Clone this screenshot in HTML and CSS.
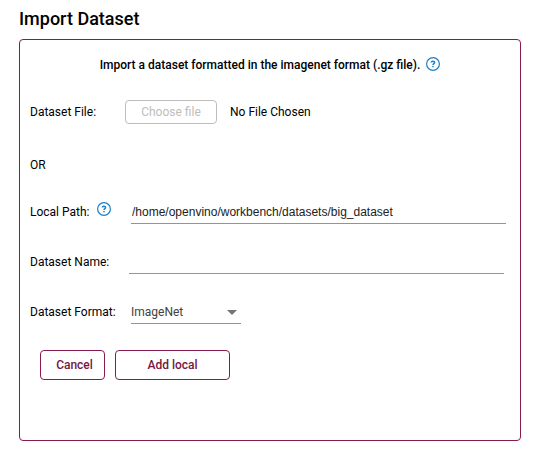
FILE: index.html
```html
<!DOCTYPE html>
<html lang="en">
<head>
<meta charset="utf-8">
<meta name="viewport" content="width=device-width, initial-scale=1">
<title>Import Dataset</title>
<link rel="stylesheet" href="styles.css">
</head>
<body>
<main class="page">
  <h1 class="title">Import Dataset</h1>
  <form class="panel">
    <div class="intro">
      <p class="intro-text">Import a dataset formatted in the imagenet format (.gz file).</p>
      <button class="help" type="button" aria-label="Help">
        <svg class="help-icon" viewBox="0 0 14 14"><circle cx="7" cy="7" r="6.4"/><path d="M5.300 5.600C5.300 4.600 6.100 4.200 7 4.200s1.600.5 1.600 1.400C8.600 6.600 7 6.700 7 8M7 9v1.300"/></svg>
      </button>
    </div>
    <div class="row row-file">
      <span class="label">Dataset File:</span>
      <button class="btn btn-file" type="button" disabled>Choose file</button>
      <span class="file-name">No File Chosen</span>
    </div>
    <p class="or">OR</p>
    <div class="row">
      <div class="label label-help">
        <label for="path">Local Path:</label>
        <button class="help" type="button" aria-label="Help">
          <svg class="help-icon" viewBox="0 0 14 14"><circle cx="7" cy="7" r="6.4"/><path d="M5.300 5.600C5.300 4.600 6.100 4.200 7 4.200s1.600.5 1.600 1.400C8.600 6.600 7 6.700 7 8M7 9v1.300"/></svg>
        </button>
      </div>
      <input class="field" id="path" type="text" value="/home/openvino/workbench/datasets/big_dataset">
    </div>
    <div class="row row-name">
      <label class="label" for="name">Dataset Name:</label>
      <input class="field" id="name" type="text">
    </div>
    <div class="row">
      <label class="label" for="format">Dataset Format:</label>
      <div class="select-wrap">
        <select class="field select" id="format"><option>ImageNet</option></select>
        <svg class="arrow" viewBox="0 0 10 5"><path d="M0 0h10L5 5z"/></svg>
      </div>
    </div>
    <div class="actions">
      <button class="btn btn-cancel" type="button">Cancel</button>
      <button class="btn btn-add" type="submit">Add local</button>
    </div>
  </form>
</main>
</body>
</html>
```
FILE: styles.css
```css
* {
  box-sizing: border-box;
}

body {
  margin: 0;
  background: #fff;
  color: #000;
  font: 12px/20px Roboto, sans-serif;
}

.page {
  padding: 7px 20px 16px 19px;
}

.title {
  margin: 0 0 8px;
  font-size: 18px;
  line-height: 24px;
  font-weight: 500;
}

.panel {
  padding: 0 14px 60px 10px;
  border: 1px solid #861b50;
  border-radius: 4px;
}

.intro {
  display: flex;
  align-items: center;
  justify-content: center;
  gap: 6px;
  height: 50px;
  padding-left: 4px;
}

.intro-text {
  margin: 0;
  font-weight: 500;
}

.help {
  display: block;
  padding: 0 0 2px;
  border: 0;
  background: none;
}

.help-icon {
  display: block;
  width: 14px;
  height: 14px;
  fill: none;
  stroke: #1b80c9;
  stroke-width: 1.2;
}

.help-icon path {
  stroke-width: 1.5;
}

.row {
  display: flex;
  align-items: center;
  height: 50px;
}

.row-file {
  height: 44px;
}

.row-name {
  padding-right: 2px;
}

.label {
  flex: 0 0 101px;
}

.row-name .label {
  flex-basis: 99px;
}

.row-file .label {
  flex-basis: 95px;
}

.label-help {
  display: flex;
  align-items: flex-start;
  gap: 8px;
}

.btn {
  padding: 0;
  border: 1px solid #861b50;
  border-radius: 4px;
  background: #fff;
  color: #76163f;
  font: 500 12px/20px Roboto, sans-serif;
}

.btn-file {
  width: 92px;
  height: 24px;
  border-color: #bdbdbd;
  color: #bdbdbd;
  font-weight: 400;
}

.file-name {
  margin-left: 13px;
}

.or {
  margin: 21px 0 12px;
}

.field {
  flex: 1;
  min-width: 0;
  height: 24px;
  padding: 0 1px;
  border: 0;
  border-bottom: 1px solid #949494;
  border-radius: 0;
  outline: 0;
  background: transparent;
  color: #212121;
  font: 12px "Liberation Sans", Arial, sans-serif;
}

.select-wrap {
  position: relative;
  width: 110px;
}

.select {
  display: block;
  width: 100%;
  padding: 0;
  appearance: none;
  color: #424242;
  font-family: Roboto, sans-serif;
}

.arrow {
  position: absolute;
  top: 10px;
  right: 4px;
  width: 10px;
  height: 5px;
  fill: #757575;
  pointer-events: none;
}

.actions {
  display: flex;
  gap: 10px;
  padding: 13px 10px 0;
}

.btn-cancel {
  width: 65px;
  height: 30px;
  padding-left: 4px;
}

.btn-add {
  width: 115px;
  height: 30px;
}
```
